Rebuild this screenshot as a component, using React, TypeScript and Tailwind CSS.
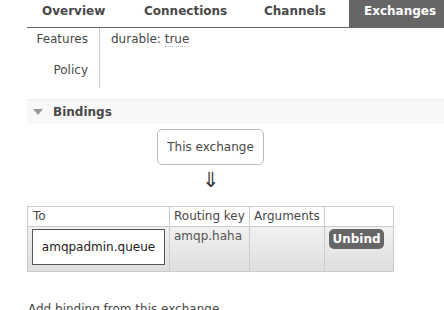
import React from "react";

export default function App() {
  const font = { fontFamily: '"DejaVu Sans", Verdana, sans-serif' };
  return (
    <div
      className="w-[444px] h-[310px] overflow-hidden bg-white text-[12px] text-[#484848] relative"
      style={font}
    >
      {/* Tabs */}
      <div className="ml-[27px] flex h-[28px] border-b border-[#666] font-bold">
        <div className="w-[102px] pl-[15px] pt-[4px] leading-[15px]">Overview</div>
        <div className="w-[120px] pl-[15px] pt-[4px] leading-[15px]">Connections</div>
        <div className="w-[100px] pl-[15px] pt-[4px] leading-[15px]">Channels</div>
        <div className="flex-1 bg-[#666] text-white pl-[15px] pt-[4px] leading-[15px]">Exchanges</div>
      </div>

      {/* Facts */}
      <div className="ml-[27px] flex h-[60px]">
        <div className="w-[73px] border-r border-[#ccc] flex flex-col items-end pr-[11px]">
          <div className="h-[30px] pt-[4px] leading-[15px]">Features</div>
          <div className="h-[30px] pt-[5px] leading-[15px]">Policy</div>
        </div>
        <div className="pl-[11px] pt-[4px] leading-[15px]">
          durable:{" "}
          <span className="border-b border-dotted border-[#bbb]">true</span>
        </div>
      </div>

      {/* Bindings header */}
      <div className="ml-[27px] mt-[11px] h-[25px] border-t border-[#eee] bg-[#f8f8f8] flex items-center">
        <svg width="10" height="6" viewBox="0 0 10 6" className="ml-[6px]">
          <polygon points="0,0 10,0 5,6" fill="#999" />
        </svg>
        <span className="ml-[10px] font-bold text-[#484848]">Bindings</span>
      </div>

      {/* Diagram */}
      <div className="ml-[27px] w-[367px] flex flex-col items-center">
        <div className="mt-[5px] w-[107px] h-[36px] border border-[#bbb] rounded-[5px] flex items-center justify-center">
          This exchange
        </div>
        <div className="h-[41px] text-[21px] leading-[24px] pt-[3px] text-[#333]">⇓</div>
      </div>

      {/* Table */}
      <table className="ml-[27px] w-[367px] border-collapse">
        <thead>
          <tr className="h-[20px]">
            <th className="w-[142px] border border-[#ccc] text-left font-normal px-[5px] leading-[15px]">To</th>
            <th className="w-[80px] border border-[#ccc] text-left font-normal px-[4px] leading-[15px]">Routing key</th>
            <th className="w-[75px] border border-[#ccc] text-left font-normal px-[4px] leading-[15px]">Arguments</th>
            <th className="border border-[#ccc]"></th>
          </tr>
        </thead>
        <tbody>
          <tr className="h-[45px] bg-gradient-to-b from-[#f1f1f1] to-[#dedede]">
            <td className="border border-[#ccc] px-[4px] align-top pt-[2px]">
              <div className="w-[133px] h-[36px] bg-white border border-[#555] flex items-center justify-center text-[#222]">
                amqpadmin.queue
              </div>
            </td>
            <td className="border border-[#ccc] align-top px-[4px] pt-[2px] leading-[15px] text-[#555]">amqp.haha</td>
            <td className="border border-[#ccc]"></td>
            <td className="border border-[#ccc] align-top px-[4px] pt-[2px]">
              <div className="w-[55px] h-[20px] bg-[#666] rounded-[5px] text-white font-bold flex items-center justify-center">
                Unbind
              </div>
            </td>
          </tr>
        </tbody>
      </table>

      <div className="ml-[28px] mt-[30px] leading-[15px] text-[#484848]">Add binding from this exchange</div>
    </div>
  );
}
